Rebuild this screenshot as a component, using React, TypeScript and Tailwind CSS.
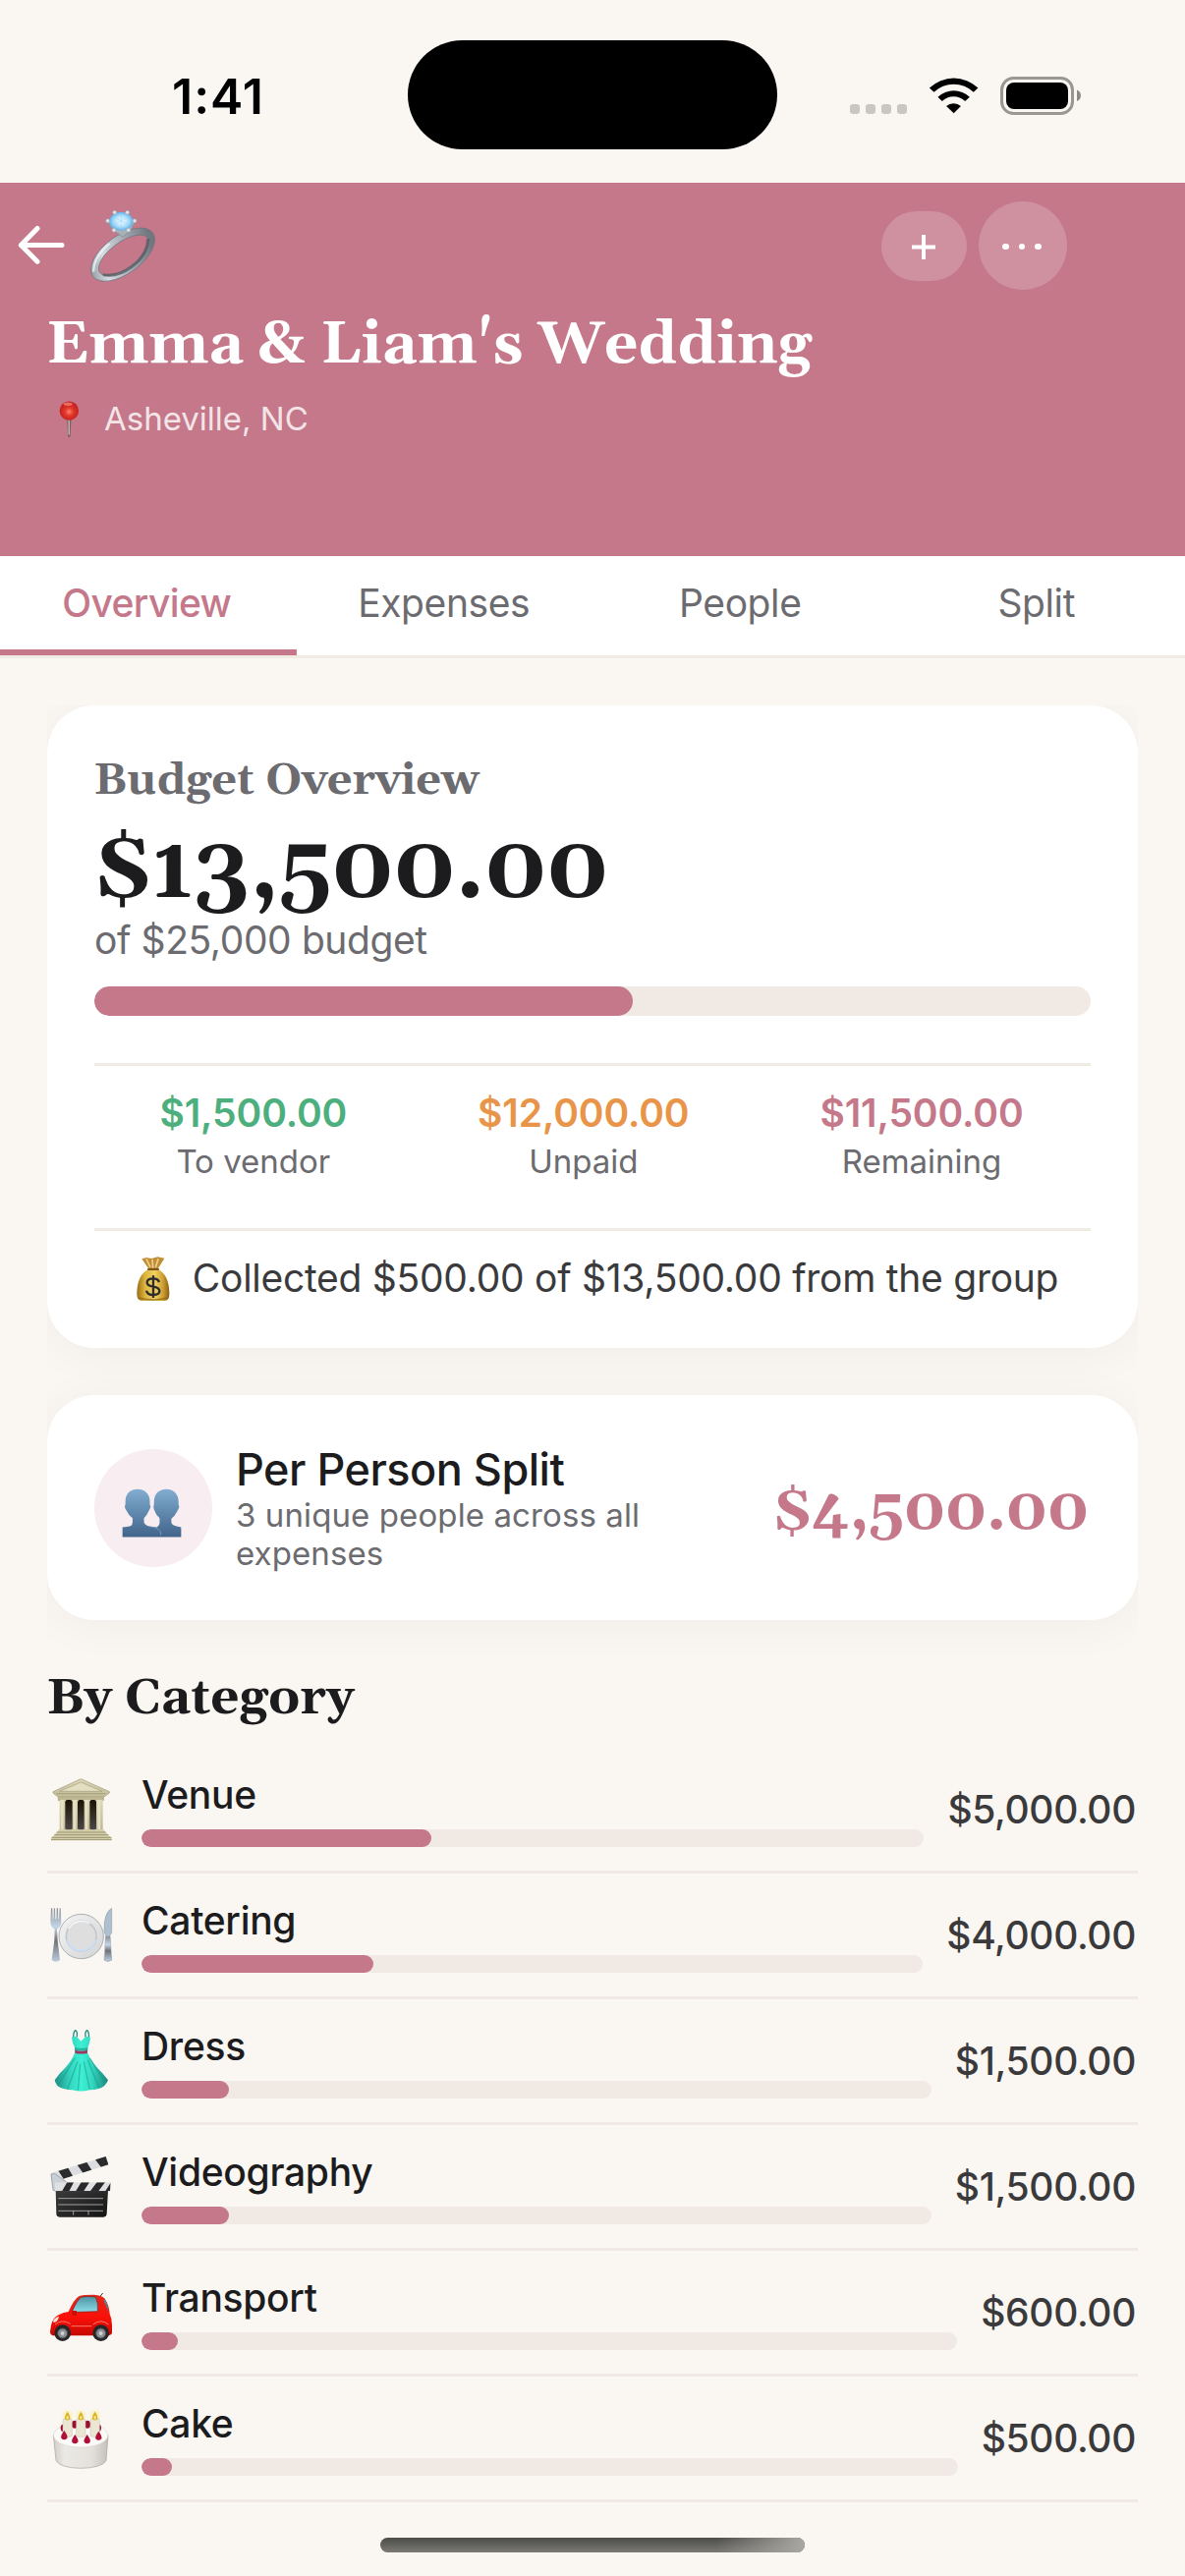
import type { ReactNode } from 'react';

const TABS = ['Overview', 'Expenses', 'People', 'Split'];

const SignalDots = () => (
  <div className="flex gap-[6px]">
    {[0, 1, 2, 3].map(i => (
      <span key={i} className="size-[10px] rounded-[3px] bg-[#c9c7c2]" />
    ))}
  </div>
);

const WifiIcon = () => (
  <svg viewBox="285 115 153 115" className="w-[51px] h-[38px]" fill="#000">
    <path d="M287 150 A108 108 0 0 1 437 150 L423 163 A88 88 0 0 0 301 163 Z" />
    <path d="M313 178 A71 71 0 0 1 411 178 L397 191 A51 51 0 0 0 326 191 Z" />
    <path d="M339 206 A34 34 0 0 1 384 206 L362 228 Z" />
  </svg>
);

const BatteryIcon = () => (
  <svg viewBox="0 0 84 39" className="w-[84px] h-[39px]">
    <rect x="1.5" y="1.5" width="72" height="36" rx="12" fill="none" stroke="#999791" strokeWidth="3" />
    <rect x="6" y="6" width="63" height="27" rx="8" fill="#000" />
    <path d="M78 13.5 C83.3 15.5 83.3 23 78 25 Z" fill="#8c8a86" />
  </svg>
);

const BackIcon = () => (
  <svg viewBox="54 148 144 122" className="w-[48px] h-[41px]" fill="none" stroke="#fff" strokeWidth="15" strokeLinecap="round" strokeLinejoin="round">
    <path d="M189 209 H64 M114 158 L64 209 L114 259" />
  </svg>
);

const RingIcon = () => (
  <svg viewBox="270 95 210 230" className="w-[70px] h-[77px]">
    <defs>
      <linearGradient id="ringBand" x1="0" y1="0" x2="1" y2="0.2">
        <stop offset="0" stopColor="#7f878e" />
        <stop offset="0.3" stopColor="#d5dbe1" />
        <stop offset="0.65" stopColor="#a3aab1" />
        <stop offset="1" stopColor="#70777f" />
      </linearGradient>
      <radialGradient id="ringGem">
        <stop offset="0" stopColor="#f2fbff" />
        <stop offset="0.6" stopColor="#b4e2fb" />
        <stop offset="1" stopColor="#5fb0ea" />
      </radialGradient>
    </defs>
    <g transform="rotate(-36 375 236)">
      <path fillRule="evenodd" fill="url(#ringBand)" stroke="#6c737b" strokeWidth="2"
        d="M262 236 a113 58 0 1 0 226 0 a113 58 0 1 0 -226 0 Z M286 239 a90 40 0 1 0 180 0 a90 40 0 1 0 -180 0 Z" />
      <path d="M290 250 Q320 283 375 282 Q436 281 466 242" fill="none" stroke="#515960" strokeWidth="9" opacity="0.75" />
      <path d="M272 226 Q295 190 362 185" fill="none" stroke="#eef2f5" strokeWidth="7" opacity="0.8" />
    </g>
    <path d="M328 135 L345 161 L375 182 L400 160 L413 134" fill="#a9b0b8" stroke="#8b929a" strokeWidth="3" />
    <ellipse cx="370" cy="134" rx="36" ry="28" fill="url(#ringGem)" />
    <path d="M346 120 L370 113 L394 120 L388 143 L370 157 L351 143 Z M346 120 L388 143 M394 120 L351 143 M370 113 V157" fill="none" stroke="#8fcdf5" strokeWidth="2" opacity="0.7" />
    <g fill="#dde3e8" stroke="#969fa7" strokeWidth="1.5">
      <circle cx="350" cy="107" r="6" />
      <circle cx="389" cy="107" r="6" />
      <circle cx="329" cy="133" r="6" />
      <circle cx="411" cy="133" r="6" />
      <circle cx="348" cy="161" r="6" />
      <circle cx="392" cy="161" r="6" />
    </g>
  </svg>
);

const PinIcon = () => (
  <svg viewBox="180 678 64 117" className="w-[21px] h-[39px]">
    <defs>
      <radialGradient id="pinHead" cx="0.5" cy="0.55" r="0.55">
        <stop offset="0" stopColor="#ff8068" />
        <stop offset="0.4" stopColor="#e0372b" />
        <stop offset="1" stopColor="#bf1c1c" />
      </radialGradient>
    </defs>
    <path d="M205 735 H218 L215 792 H208 Z" fill="#75625c" />
    <path d="M211 738 V785" stroke="#d8c8c4" strokeWidth="3.5" />
    <circle cx="211.5" cy="711" r="29.5" fill="url(#pinHead)" />
    <ellipse cx="208" cy="690" rx="14" ry="5" fill="#ff9c8e" opacity="0.6" />
  </svg>
);

const MoneyBagIcon = () => (
  <svg viewBox="155 80 144 138" className="w-12 h-[46px]">
    <defs>
      <linearGradient id="bag" x1="0" y1="0" x2="1" y2="0">
        <stop offset="0" stopColor="#9a6d14" />
        <stop offset="0.25" stopColor="#dcb53f" />
        <stop offset="0.55" stopColor="#f0d160" />
        <stop offset="0.8" stopColor="#cfa034" />
        <stop offset="1" stopColor="#8a5f12" />
      </linearGradient>
    </defs>
    <path d="M192 90 L206 86 L222 89 L240 84 L261 88 L240 122 H214 Z" fill="#c28e35" />
    <path d="M206 90 L218 116 M224 92 L226 118 M242 90 L234 116" stroke="#edd08a" strokeWidth="5" />
    <path d="M213 121 H241 Q275 138 276 195 Q277 218 262 218 H192 Q176 218 177 195 Q178 138 213 121 Z" fill="url(#bag)" />
    <path d="M212 122 H242" stroke="#7d5413" strokeWidth="6" strokeLinecap="round" />
    <path d="M182 209 Q226 221 271 209" fill="none" stroke="#8a5f12" strokeWidth="5" opacity="0.7" />
    <path d="M245 161 Q241 150 227 150 Q208 150 208 162 Q208 173 227 175 Q246 178 246 189 Q246 200 227 200 Q209 200 206 187 M227 141 V209" fill="none" stroke="#2d2b2b" strokeWidth="7" />
  </svg>
);

const PeopleIcon = () => (
  <svg viewBox="130 792 190 156" className="w-[63px] h-[52px]">
    <defs>
      <linearGradient id="bust" x1="0" y1="0" x2="0" y2="1">
        <stop offset="0" stopColor="#82add0" />
        <stop offset="0.5" stopColor="#6088ae" />
        <stop offset="1" stopColor="#42648a" />
      </linearGradient>
    </defs>
    <g fill="url(#bust)">
      <path d="M181 797 C206 797 219 814 219 835 L219 845 Q223 848 220 855 Q217 862 215 865 Q210 878 201 886 V898 Q203 907 216 911 L240 914 Q252 918 254 944 H135 V914 Q150 913 160 910 Q166 907 166 898 V886 Q153 876 148 864 Q144 860 142 851 Q143 846 144 843 L144 835 C144 813 157 797 181 797 Z" />
      <path d="M270 797 C294 797 307 814 307 835 L307 845 Q311 849 307 857 Q304 863 302 866 Q296 879 285 887 V899 Q286 908 301 911 L315 914 V944 H254 Q253 925 240 914 Q249 909 249 899 V886 Q239 878 235 866 Q230 858 230 850 Q232 846 232 835 C232 813 246 797 270 797 Z" />
    </g>
    <path d="M222 913 Q250 914 254 936" fill="none" stroke="#7fa3c4" strokeWidth="2" />
  </svg>
);

const VenueIcon = () => (
  <svg viewBox="54 78 216 216" className="size-[72px]">
    <defs>
      <linearGradient id="stone" x1="0" y1="0" x2="0" y2="1">
        <stop offset="0" stopColor="#ddd7b8" />
        <stop offset="1" stopColor="#bcb58f" />
      </linearGradient>
      <linearGradient id="hall" x1="0" y1="0" x2="0" y2="1">
        <stop offset="0" stopColor="#1a1304" />
        <stop offset="1" stopColor="#4c4749" />
      </linearGradient>
    </defs>
    <path d="M157 92 L244 131 V135 L226 148 V158 H88 V148 L72 135 V131 Z" fill="url(#stone)" stroke="#9c9673" strokeWidth="2" />
    <path d="M157 102 L222 130 H92 Z" fill="#e3dec2" stroke="#a59f7d" strokeWidth="2" />
    <path d="M82 137 H233" stroke="#a59f7d" strokeWidth="3" />
    <path d="M88 147 H226" stroke="#b5ae8b" strokeWidth="6" strokeDasharray="6 3" />
    <rect x="92" y="156" width="132" height="93" fill="url(#stone)" />
    <rect x="109" y="156" width="22" height="93" rx="7" fill="url(#hall)" />
    <rect x="147" y="156" width="20" height="93" rx="7" fill="url(#hall)" />
    <rect x="184" y="156" width="20" height="93" rx="7" fill="url(#hall)" />
    <g fill="#e5dfc4">
      <rect x="95" y="156" width="9" height="90" />
      <rect x="134" y="156" width="8" height="90" />
      <rect x="170" y="156" width="8" height="90" />
      <rect x="208" y="156" width="9" height="90" />
    </g>
    <path d="M90 247 H226 L234 256 L242 264 L251 272 V279 H66 V272 L75 264 L82 256 Z" fill="#d5cfac" />
    <path d="M84 255 H233 M76 263 H241 M68 271 H250 M66 278 H251" stroke="#99936f" strokeWidth="3" />
  </svg>
);

const CateringIcon = () => (
  <svg viewBox="54 462 216 216" className="size-[72px]">
    <defs>
      <linearGradient id="steel" x1="0" y1="0" x2="0" y2="1">
        <stop offset="0" stopColor="#8c8f94" />
        <stop offset="0.35" stopColor="#c4d6ea" />
        <stop offset="0.6" stopColor="#6f7175" />
        <stop offset="1" stopColor="#b9cade" />
      </linearGradient>
      <linearGradient id="plate" x1="0" y1="0" x2="1" y2="1">
        <stop offset="0" stopColor="#f4f4f4" />
        <stop offset="1" stopColor="#d3d4d6" />
      </linearGradient>
    </defs>
    <path d="M66 487 H70 L71 520 H73 L75 487 H78 L79 520 H82 L83 487 H87 L88 520 H90 L92 487 H95 L97 530 Q96 546 84 550 L86 585 L93 645 Q80 655 68 645 L76 585 L77 550 Q65 545 64 530 Z" fill="url(#steel)" />
    <circle cx="158" cy="573" r="68" fill="url(#plate)" stroke="#a0a1a3" strokeWidth="2.5" />
    <circle cx="158" cy="572" r="46" fill="#dedede" stroke="#c3c7cc" strokeWidth="5" />
    <path d="M114 584 A46 46 0 0 0 202 584" fill="none" stroke="#c9dff8" strokeWidth="5" />
    <path d="M119 550 A46 46 0 0 1 184 534" fill="none" stroke="#fafafa" strokeWidth="4" />
    <path d="M251 487 Q226 500 228 560 L233 569 L228 645 Q239 654 251 645 L246 569 L251 562 Z" fill="#aebfd0" stroke="#8693a3" strokeWidth="1.5" />
    <path d="M233 572 L230 643 Q240 651 250 643 L246 572 Z" fill="url(#steel)" />
  </svg>
);

const DressIcon = () => (
  <svg viewBox="54 846 216 216" className="size-[72px]">
    <defs>
      <linearGradient id="dress" x1="0" y1="0" x2="1" y2="0">
        <stop offset="0" stopColor="#1f8e85" />
        <stop offset="0.3" stopColor="#32d8c0" />
        <stop offset="0.5" stopColor="#3df0d4" />
        <stop offset="0.7" stopColor="#32d8c0" />
        <stop offset="1" stopColor="#1b857d" />
      </linearGradient>
    </defs>
    <path d="M145 880 Q147 862 140 860 Q133 864 134 888 M171 880 Q169 862 176 860 Q183 864 181 888" fill="none" stroke="#20857a" strokeWidth="4" />
    <path d="M134 880 L141 878 Q150 882 157 893 Q166 882 174 878 L185 880 Q187 892 178 912 L177 928 Q190 960 223 991 L240 1012 Q236 1022 228 1030 Q214 1041 184 1042 Q157 1049 131 1042 Q102 1041 86 1030 Q79 1022 77 1012 L93 991 Q126 960 139 928 L138 912 Q128 892 130 880 Z" fill="url(#dress)" />
    <path d="M138 911 Q157 918 178 911 V921 H138 Z" fill="#218f83" opacity="0.6" />
    <path d="M139 920 Q157 925 177 920 V929 Q157 934 139 929 Z" fill="#9c3b62" />
    <path d="M138 945 L88 1028 M147 955 L116 1039 M155 962 L148 1043 M166 955 L184 1040 M178 950 L213 1036 M184 945 L232 1018" stroke="#1c9387" strokeWidth="4" opacity="0.5" />
  </svg>
);

const ClapperIcon = () => (
  <svg viewBox="54 90 216 216" className="size-[72px]">
    <defs>
      <clipPath id="clapTop"><path d="M64 157 L233 105 L241 130 L72 183 Z" /></clipPath>
      <clipPath id="clapBar"><path d="M76 184 H248 L246 211 H78 Z" /></clipPath>
      <linearGradient id="slate" x1="0" y1="0" x2="1" y2="1">
        <stop offset="0" stopColor="#3b3b3c" />
        <stop offset="1" stopColor="#141415" />
      </linearGradient>
    </defs>
    <g clipPath="url(#clapTop)">
      <rect x="60" y="100" width="190" height="90" fill="#dcdddf" />
      <path d="M84 142 L108 180 L138 175 L112 130 Z M140 122 L170 165 L196 156 L170 115 Z M196 108 L228 150 L255 140 L230 96 Z M52 150 L72 190 L84 186 Z" fill="#2b2b2d" />
    </g>
    <path d="M66 160 L76 157 L112 182 L112 198 L84 211 L72 208 Z" fill="#c9d0d6" stroke="#84898e" strokeWidth="2" />
    <path d="M80 208 H240 L236 280 Q235 290 226 290 H92 Q82 290 82 280 Z" fill="url(#slate)" />
    <g clipPath="url(#clapBar)">
      <rect x="76" y="182" width="174" height="30" fill="#dfe0e1" />
      <path d="M116 182 H136 L120 213 H98 Z M159 182 H184 L164 213 H140 Z M207 182 H232 L209 213 H184 Z M250 182 L230 213 H250 Z" fill="#29292b" />
    </g>
    <path d="M88 233 H225 M88 252 H225 M88 271 H225 M134 271 V284 M180 271 V284" stroke="#b9b9bb" strokeWidth="2.5" />
  </svg>
);

const CarIcon = () => (
  <svg viewBox="54 474 216 216" className="size-[72px]">
    <defs>
      <linearGradient id="carBody" x1="0" y1="0" x2="0" y2="1">
        <stop offset="0" stopColor="#e2271a" />
        <stop offset="0.55" stopColor="#fa1109" />
        <stop offset="1" stopColor="#c50803" />
      </linearGradient>
      <linearGradient id="carGlass" x1="0" y1="0" x2="0" y2="1">
        <stop offset="0" stopColor="#4d93a1" />
        <stop offset="1" stopColor="#8cdbe8" />
      </linearGradient>
    </defs>
    <path d="M216 532 L224 522" stroke="#333" strokeWidth="3" />
    <path d="M66 620 Q72 596 90 588 Q104 581 119 579 Q136 540 152 531 Q162 527 196 527 Q222 528 230 539 Q244 560 245 586 Q252 600 252 620 V645 Q248 652 236 652 H72 Q63 650 63 640 Z" fill="url(#carBody)" />
    <path d="M131 577 Q144 545 157 535 Q172 531 202 534 Q211 553 208 578 L145 580 Z" fill="url(#carGlass)" stroke="#7d1a15" strokeWidth="2" />
    <path d="M230 541 Q241 558 242 580 Q235 563 226 545 Z" fill="#57838d" />
    <path d="M129 576 H144 V590 Q136 592 130 588 Z" fill="#c90e08" />
    <path d="M72 610 Q74 598 90 593 Q88 608 76 612 Z" fill="#f6dfd9" />
    <path d="M78 618 Q99 600 125 616 M194 618 Q218 599 242 618 M128 623 H190" fill="none" stroke="#ff7a6c" strokeWidth="3" />
    <g>
      <circle cx="101" cy="644" r="25" fill="#262628" />
      <circle cx="218" cy="644" r="25" fill="#262628" />
      <circle cx="101" cy="645" r="15" fill="#8d9093" stroke="#4c4e50" strokeWidth="3" />
      <circle cx="218" cy="645" r="15" fill="#8d9093" stroke="#4c4e50" strokeWidth="3" />
      <circle cx="101" cy="645" r="6" fill="#cfd1d3" />
      <circle cx="218" cy="645" r="6" fill="#cfd1d3" />
    </g>
  </svg>
);

const CakeIcon = () => (
  <svg viewBox="54 858 216 216" className="size-[72px]">
    <defs>
      <linearGradient id="cakeSide" x1="0" y1="0" x2="1" y2="0">
        <stop offset="0" stopColor="#cfccc6" />
        <stop offset="0.2" stopColor="#ebe9e5" />
        <stop offset="0.7" stopColor="#e4e1dc" />
        <stop offset="1" stopColor="#c4c0b9" />
      </linearGradient>
    </defs>
    <path d="M73 956 H240 L234 1034 Q220 1056 157 1057 Q95 1056 81 1034 Z" fill="url(#cakeSide)" stroke="#aba69d" strokeWidth="2" />
    <ellipse cx="156.5" cy="956" rx="83" ry="37" fill="#fbfaf9" stroke="#d1cec8" strokeWidth="1.5" />
    <g fill="#9c0f2f">
      <ellipse cx="102" cy="934" rx="7" ry="11" />
      <ellipse cx="138" cy="923" rx="9" ry="12" />
      <ellipse cx="177" cy="923" rx="9" ry="12" />
      <ellipse cx="212" cy="934" rx="7" ry="11" />
    </g>
    {[116, 157, 200].map(x => (
      <g key={x}>
        <ellipse cx={x} cy="897" rx="15" ry="19" fill="#fbefa0" opacity="0.5" />
        <rect x={x - 14} y="905" width="28" height="56" rx="7" fill="#eae6d3" stroke="#c3bda5" strokeWidth="1.5" />
        <path d={`M${x} 884 Q${x + 11} 900 ${x + 7} 907 Q${x} 914 ${x - 7} 907 Q${x - 11} 900 ${x} 884 Z`} fill="#d9b022" />
        <ellipse cx={x} cy="902" rx="3.5" ry="6" fill="#fbe88a" />
      </g>
    ))}
    <g fill="#b01035">
      <path d="M106 942 Q118 958 115 965 Q106 974 97 965 Q94 958 106 942 Z" />
      <path d="M139 954 Q151 970 148 977 Q139 986 130 977 Q127 970 139 954 Z" />
      <path d="M176 954 Q188 970 185 977 Q176 986 167 977 Q164 970 176 954 Z" />
      <path d="M211 944 Q223 960 220 967 Q211 976 202 967 Q199 960 211 944 Z" />
    </g>
  </svg>
);

interface Category {
  name: string;
  amount: number;
  icon: ReactNode;
}

const CATEGORIES: Category[] = [
  { name: 'Venue', amount: 5000, icon: <VenueIcon /> },
  { name: 'Catering', amount: 4000, icon: <CateringIcon /> },
  { name: 'Dress', amount: 1500, icon: <DressIcon /> },
  { name: 'Videography', amount: 1500, icon: <ClapperIcon /> },
  { name: 'Transport', amount: 600, icon: <CarIcon /> },
  { name: 'Cake', amount: 500, icon: <CakeIcon /> },
];

const TOTAL = 13500;
const BUDGET = 25000;

const fmt = (v: number) => `$${v.toLocaleString('en-US', { minimumFractionDigits: 2 })}`;

const STATS = [
  { label: 'To vendor', value: 1500, color: 'text-[#4caf7d]' },
  { label: 'Unpaid', value: 12000, color: 'text-[#e8954a]' },
  { label: 'Remaining', value: BUDGET - TOTAL, color: 'text-[#c4788a]' },
];

function StatusBar() {
  return (
    <div className="h-[186px] flex justify-between">
      <div className="w-[415px] pl-[175px] pt-[68px] text-[50px] leading-[60px] font-semibold tracking-[1px] text-black">1:41</div>
      <div className="mt-[41px] w-[376px] h-[111px] rounded-full bg-black" />
      <div className="w-[415px] pl-[74px] pt-[78px] flex items-start">
        <div className="mt-[28px]"><SignalDots /></div>
        <div className="ml-[22px]"><WifiIcon /></div>
        <div className="ml-[22px]"><BatteryIcon /></div>
      </div>
    </div>
  );
}

function Header() {
  return (
    <header className="h-[380px] bg-[#c4788a] text-white pt-[19px]">
      <div className="h-[90px] flex items-center pl-[18px] pr-[120px]">
        <div className="pb-[2px]"><BackIcon /></div>
        <div className="ml-6"><RingIcon /></div>
        <div className="flex-1" />
        <button className="w-[87px] h-[71px] rounded-full bg-[#cf90a0] flex items-center justify-center pt-[2px] pr-[1px]">
          <svg viewBox="0 0 24 25" className="w-6 h-[25px]" stroke="#fff" strokeWidth="4">
            <path d="M12 0 V25 M0 12.5 H24" />
          </svg>
        </button>
        <button className="ml-3 size-[90px] rounded-full bg-[#cf90a0] flex items-center justify-center gap-[10px] pt-[2px] pr-[2px]">
          <span className="size-[6.5px] rounded-full bg-white" />
          <span className="size-[6.5px] rounded-full bg-white" />
          <span className="size-[6.5px] rounded-full bg-white" />
        </button>
      </div>
      <h1 className="mt-[21px] pl-[47px] font-[Gelasio,Georgia,'Liberation_Serif',serif] font-bold text-[60px] leading-[72px]">Emma &amp; Liam's Wedding</h1>
      <div className="mt-[18px] pl-[60px] flex items-center text-[33px] leading-[40px] text-[#f3e4e8]">
        <PinIcon />
        <span className="ml-[25px]">Asheville, NC</span>
      </div>
    </header>
  );
}

function TabBar() {
  return (
    <nav className="grid grid-cols-4 bg-white border-b-3 border-[#f0ebe3] text-[39px] leading-[48px] text-center">
      {TABS.map((tab, i) => (
        <div
          key={tab}
          className={`h-[101px] pt-6 border-b-6 ${i === 0 ? 'pr-[3px] border-[#c4788a] text-[#c4788a] font-medium tracking-[-0.6px]' : 'pr-[1px] border-transparent text-[#6b6b70] tracking-[-0.4px]'}`}
        >
          {tab}
        </div>
      ))}
    </nav>
  );
}

function BudgetCard() {
  return (
    <section className="rounded-[48px] bg-white px-12 pt-[51px] pb-12 shadow-[0_6px_48px_rgba(0,0,0,0.045)]">
      <h2 className="-ml-px font-[Gelasio,Georgia,'Liberation_Serif',serif] font-bold text-[45px] leading-[52px] text-[#6b6b70]">Budget Overview</h2>
      <p className="mt-[18px] font-[Gelasio,Georgia,'Liberation_Serif',serif] font-bold oldstyle-nums text-[90px] leading-[96px] text-[#1c1c1e]">{fmt(TOTAL)}</p>
      <p className="text-[39px] leading-[44px] tracking-[-0.4px] text-[#6b6b70]">of $25,000 budget</p>
      <div className="mt-[25px] h-[30px] rounded-full bg-[#f1e9e3] overflow-hidden">
        <div className="h-full rounded-full bg-[#c4788a]" style={{ width: `${TOTAL / BUDGET * 100}%` }} />
      </div>
      <div className="mt-12 pt-6 pr-[2px] border-t-3 border-[#f0ebe3] flex justify-around text-center">
        {STATS.map(s => (
          <div key={s.label}>
            <p className={`text-[39px] leading-[48px] font-semibold tracking-[-0.1px] ${s.color}`}>{fmt(s.value)}</p>
            <p className="mt-[5px] text-[33px] leading-[40px] text-[#6b6b70]">{s.label}</p>
          </div>
        ))}
      </div>
      <div className="mt-12 pt-[25px] pl-[3px] border-t-3 border-[#f0ebe3] flex justify-center items-center gap-4">
        <MoneyBagIcon />
        <p className="text-[39px] leading-[46px] tracking-[-0.27px] text-[#3a3a3c]">Collected $500.00 of $13,500.00 from the group</p>
      </div>
    </section>
  );
}

function SplitCard() {
  return (
    <section className="mt-12 rounded-[48px] bg-white px-12 pt-[49px] pb-12 flex items-center shadow-[0_6px_48px_rgba(0,0,0,0.045)]">
      <div className="size-[120px] shrink-0 rounded-full bg-[#f8edf0] flex items-center justify-center pt-[10px] pr-[3px]">
        <PeopleIcon />
      </div>
      <div className="ml-6 w-[450px]">
        <p className="text-[45px] leading-[54px] font-medium tracking-[-0.5px] text-[#1c1c1e]">Per Person Split</p>
        <p className="text-[33px] leading-[39px] tracking-[0.1px] text-[#6b6b70]">3 unique people across all expenses</p>
      </div>
      <p className="ml-auto pt-[8px] pr-[2px] font-[Gelasio,Georgia,'Liberation_Serif',serif] font-bold oldstyle-nums text-[60px] leading-[72px] text-[#c4788a]">$4,500.00</p>
    </section>
  );
}

function CategoryRow({ name, amount, icon }: Category) {
  return (
    <div className="h-32 border-b-3 border-[#f1e9e3] flex items-center gap-6">
      {icon}
      <div className="flex-1">
        <p className="text-[39px] leading-[48px] font-medium tracking-[-0.3px] text-[#1c1c1e]">{name}</p>
        <div className="mt-[11px] h-[18px] rounded-full bg-[#f1e9e3] overflow-hidden">
          <div className="h-full rounded-full bg-[#c4788a]" style={{ width: `${amount / TOTAL * 100}%` }} />
        </div>
      </div>
      <p className="pr-[2px] text-[39px] leading-[48px] font-medium tracking-[-0.35px] text-[#3a3a3c]">{fmt(amount)}</p>
    </div>
  );
}

export default function App() {
  return (
    <div className="w-[1206px] h-[2622px] bg-[#faf7f2] font-[Inter,sans-serif] overflow-hidden flex flex-col">
      <StatusBar />
      <Header />
      <TabBar />
      <main className="mx-12 mt-12 h-[1865px] shrink-0 overflow-hidden">
        <BudgetCard />
        <SplitCard />
        <h2 className="mt-[50px] mb-[20px] -ml-px font-[Gelasio,Georgia,'Liberation_Serif',serif] font-bold text-[51px] leading-[60px] text-[#1c1c1e]">By Category</h2>
        {CATEGORIES.map(c => (
          <CategoryRow key={c.name} {...c} />
        ))}
      </main>
      <div className="mx-auto w-[432px] h-[15px] shrink-0 rounded-full bg-linear-to-b from-[#4b4b48] to-[#7b7a76] overflow-hidden">
        <div className="ml-auto w-[90px] h-full bg-linear-to-r from-transparent to-[#aaa8a3]" />
      </div>
    </div>
  );
}
